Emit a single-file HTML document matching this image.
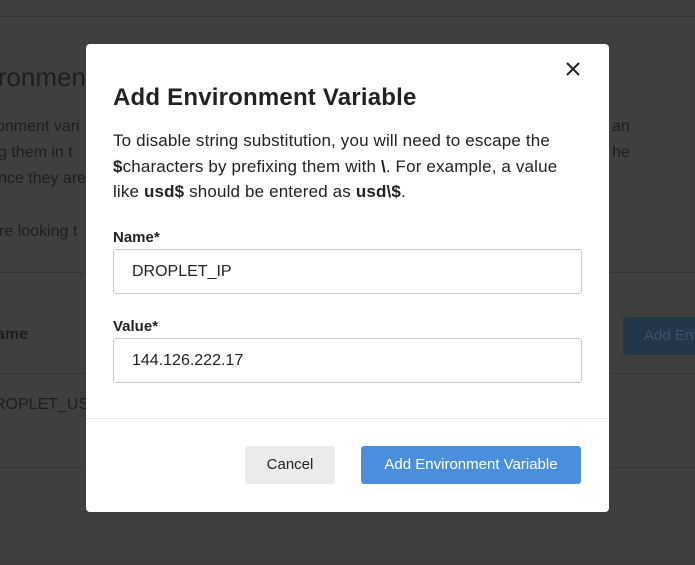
<!DOCTYPE html>
<html><head><style>
*{margin:0;padding:0;box-sizing:border-box}
body{width:695px;height:565px;background:#3f3f3f;font-family:"Liberation Sans",sans-serif;position:relative;overflow:hidden}
.bg{position:absolute;color:#1e1e1e;white-space:nowrap}
.ln{position:absolute;left:0;width:695px;height:1px;background:#363636}
.modal{position:absolute;left:86px;top:44px;width:523px;height:468px;background:#fff;border-radius:4px}
h1{position:absolute;left:27px;top:40px;font-size:24px;font-weight:bold;color:#222;letter-spacing:0.2px;white-space:nowrap}
.p{position:absolute;left:27px;top:84px;width:480px;font-size:17px;letter-spacing:0.15px;line-height:25.5px;color:#222}
.lab{position:absolute;left:27px;font-size:15px;font-weight:bold;color:#222}
.in{position:absolute;left:27px;width:469px;height:45px;border:1px solid #c8c8c8;border-radius:3px;font-size:16px;color:#222;padding:13px 0 0 18px}
.sep{position:absolute;left:0;top:374px;width:523px;height:1px;background:#e6e6e6}
.btn{position:absolute;top:402px;height:38px;border-radius:3px;font-size:15px;text-align:center;line-height:38px}
</style></head><body>
<div class="ln" style="top:16px"></div>
<div class="ln" style="top:272px"></div>
<div class="ln" style="top:373px"></div>
<div class="ln" style="top:467px"></div>
<div class="bg" style="left:-8px;top:62px;font-size:26px">ironmen</div>
<div class="bg" style="left:-4px;top:118px;font-size:16px">onment vari</div>
<div class="bg" style="left:-2px;top:144px;font-size:16px">g them in t</div>
<div class="bg" style="left:-2px;top:170px;font-size:16px">nce they are</div>
<div class="bg" style="left:-4px;top:223px;font-size:16px">'re looking t</div>
<div class="bg" style="left:-4px;top:326px;font-size:16px;font-weight:bold">ame</div>
<div class="bg" style="left:-6px;top:396px;font-size:16px">ROPLET_US</div>
<div class="bg" style="left:612px;top:118px;font-size:16px">an</div>
<div class="bg" style="left:612px;top:144px;font-size:16px">he</div>
<div style="position:absolute;left:623px;top:317px;width:80px;height:38px;background:#23364a;border-radius:3px;color:#3d5068;font-size:15px;line-height:38px;padding-left:21px;white-space:nowrap">Add Env</div>
<div class="modal">
<svg style="position:absolute;left:480px;top:18px" width="14" height="14" viewBox="0 0 14 14"><path d="M1 1L13 13M13 1L1 13" stroke="#222" stroke-width="2"/></svg>
<h1>Add Environment Variable</h1>
<div class="p">To disable string substitution, you will need to escape the<br><b>$</b>characters by prefixing them with <b>\</b>. For example, a value<br>like <b>usd$</b> should be entered as <b>usd\$</b>.</div>
<div class="lab" style="top:185px">Name*</div>
<div class="in" style="top:205px">DROPLET_IP</div>
<div class="lab" style="top:274px">Value*</div>
<div class="in" style="top:294px">144.126.222.17</div>
<div class="sep"></div>
<div class="btn" style="left:159px;width:90px;background:#ebebeb;color:#222">Cancel</div>
<div class="btn" style="left:275px;width:220px;background:#4a8fdb;color:#fff">Add Environment Variable</div>
</div>
</body></html>
